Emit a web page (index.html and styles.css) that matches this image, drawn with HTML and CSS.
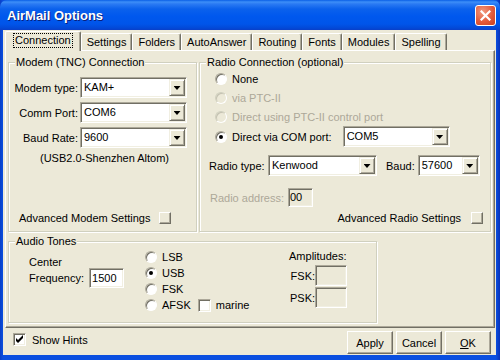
FILE: index.html
```html
<!DOCTYPE html>
<html lang="en">
<head>
    <meta charset="UTF-8">
    <title>AirMail Options</title>
    <link rel="stylesheet" href="styles.css">
</head>
<body>
    <div class="window">
        <div class="titlebar">
            <span class="title">AirMail Options</span>
            <span class="close-btn">
                <svg width="11" height="11" viewBox="0 0 11 11"><path d="M1.5 1.5 L9.5 9.5 M9.5 1.5 L1.5 9.5" stroke="#fff" stroke-width="2.2" stroke-linecap="square"/></svg>
            </span>
        </div>
        <div class="client">
            <div class="tabs">
                <div class="tab active"><span class="focus">Connection</span></div>
                <div class="tab">Settings</div>
                <div class="tab">Folders</div>
                <div class="tab">AutoAnswer</div>
                <div class="tab">Routing</div>
                <div class="tab">Fonts</div>
                <div class="tab">Modules</div>
                <div class="tab">Spelling</div>
            </div>

            <div class="page">
                <div class="top-row">
                    <fieldset class="group modem">
                        <legend>Modem (TNC) Connection</legend>
                        <div class="field-grid">
                            <label>Modem type:</label>
                            <div class="combo"><span class="combo-value">KAM+</span><span class="combo-btn"></span></div>
                            <label>Comm Port:</label>
                            <div class="combo"><span class="combo-value">COM6</span><span class="combo-btn"></span></div>
                            <label>Baud Rate:</label>
                            <div class="combo"><span class="combo-value">9600</span><span class="combo-btn"></span></div>
                        </div>
                        <div class="port-note">(USB2.0-Shenzhen Altom)</div>
                        <div class="advanced modem-adv">
                            <span>Advanced Modem Settings</span>
                            <span class="mini-btn"></span>
                        </div>
                    </fieldset>

                    <fieldset class="group radio-conn">
                        <legend>Radio Connection (optional)</legend>
                        <div class="option"><span class="radio"></span>None</div>
                        <div class="option disabled"><span class="radio"></span>via PTC-II</div>
                        <div class="option disabled"><span class="radio"></span>Direct using PTC-II control port</div>
                        <div class="option com-option">
                            <span class="radio checked"></span>Direct via COM port:
                            <div class="combo com-combo"><span class="combo-value">COM5</span><span class="combo-btn"></span></div>
                        </div>
                        <div class="type-row">
                            <label class="type-label">Radio type:</label>
                            <div class="combo type-combo"><span class="combo-value">Kenwood</span><span class="combo-btn"></span></div>
                            <label class="baud-label">Baud:</label>
                            <div class="combo baud-combo"><span class="combo-value">57600</span><span class="combo-btn"></span></div>
                        </div>
                        <div class="address-row">
                            <label class="disabled">Radio address:</label>
                            <span class="edit address-edit">00</span>
                        </div>
                        <div class="advanced radio-adv">
                            <span>Advanced Radio Settings</span>
                            <span class="mini-btn"></span>
                        </div>
                    </fieldset>
                </div>

                <fieldset class="group audio">
                    <legend>Audio Tones</legend>
                    <div class="audio-body">
                        <div class="freq">
                            <div class="freq-caption">Center</div>
                            <div class="freq-row">
                                <label>Frequency:</label>
                                <span class="edit freq-edit">1500</span>
                            </div>
                        </div>
                        <div class="modes">
                            <div class="mode"><span class="radio"></span>LSB</div>
                            <div class="mode"><span class="radio checked"></span>USB</div>
                            <div class="mode"><span class="radio"></span>FSK</div>
                            <div class="mode">
                                <span class="radio"></span>AFSK
                                <span class="checkbox marine-box"></span>marine
                            </div>
                        </div>
                        <div class="amps">
                            <div class="amps-title">Amplitudes:</div>
                            <div class="amps-grid">
                                <label>FSK:</label>
                                <span class="edit amp-edit"></span>
                                <label>PSK:</label>
                                <span class="edit amp-edit"></span>
                            </div>
                        </div>
                    </div>
                </fieldset>
            </div>

            <div class="footer">
                <div class="check-row">
                    <span class="checkbox">
                        <svg width="9" height="9" viewBox="0 0 9 9"><path d="M1 3 L3 5 L8 0 L8 3 L3 8 L1 6 Z" fill="#000"/></svg>
                    </span>
                    Show Hints
                </div>
                <div class="buttons">
                    <button class="btn">Apply</button>
                    <button class="btn">Cancel</button>
                    <button class="btn"><u>O</u>K</button>
                </div>
            </div>
        </div>
    </div>
</body>
</html>
```

FILE: styles.css
```css
* {
    box-sizing: border-box;
}
body {
    margin: 0;
    font-family: "Liberation Sans", Arial, sans-serif;
    font-size: 11px;
    color: #000;
    background: #ece9d8;
}
.window {
    width: 500px;
    height: 360px;
    display: flex;
    flex-direction: column;
    background: linear-gradient(to right, #0a3fc6, #0a4fe0 3px, #0a4fe0 496px, #0832b8);
    overflow: hidden;
}

/* title bar */
.titlebar {
    height: 30px;
    flex: none;
    display: flex;
    align-items: center;
    justify-content: space-between;
    padding: 0 4px 0 7px;
    border-radius: 7px 7px 0 0;
    background: linear-gradient(to bottom, #0a5fe6 0px, #3d8ff8 2px, #2a7af3 4px, #0b61ec 9px, #0058ee 16px, #0055ea 24px, #0249d8 28px, #0a3fc8 30px);
}
.title {
    color: #fff;
    font-weight: bold;
    font-size: 13px;
    text-shadow: 1px 1px 0 #0a1f7a;
}
.close-btn {
    width: 21px;
    height: 21px;
    display: flex;
    align-items: center;
    justify-content: center;
    border: 1px solid #fff;
    border-radius: 3px;
    background: radial-gradient(circle at 35% 30%, #f19a7f, #e35b3c 55%, #c9401f);
}

/* client area */
.client {
    flex: 1;
    margin: 0 4px 5px 3px;
    background: #ece9d8;
    display: flex;
    flex-direction: column;
}
.tabs {
    height: 20px;
    flex: none;
    display: flex;
    align-items: flex-end;
    padding-left: 2px;
}
.tab {
    height: 17px;
    padding: 0 5px;
    line-height: 16px;
    border-top: 1px solid #fff;
    border-left: 1px solid #fff;
    border-right: 1px solid #716f64;
    box-shadow: inset -1px 0 0 #aca899;
    border-radius: 2px 2px 0 0;
    white-space: nowrap;
}
.tab.active {
    height: 20px;
    margin-bottom: -1px;
    padding: 1px 7px 0;
    line-height: 13px;
    background: #ece9d8;
    position: relative;
    z-index: 1;
}
.focus {
    display: inline-block;
    border: 1px dotted #000;
    padding: 0 1px;
}

.page {
    height: 278px;
    flex: none;
    margin: 0 1px 0 2px;
    padding: 5px 3px 0 2px;
    border: 1px solid;
    border-color: #fff #716f64 #716f64 #fff;
    box-shadow: inset -1px -1px 0 #aca899;
}
.top-row {
    display: flex;
    gap: 2px;
}

/* group boxes */
.group {
    margin: 0;
    padding: 0;
    min-width: 0;
    border: 1px solid #d0d0bf;
    box-shadow: 1px 1px 0 #fff, inset 1px 1px 0 #fff;
}
.group legend {
    margin-left: 6px;
    padding: 0 1px;
    line-height: 13px;
    background: #ece9d8;
}
.modem, .radio-conn {
    height: 176px;
}
.modem {
    width: 189px;
}
.radio-conn {
    width: 292px;
}
.audio {
    width: 369px;
    height: 88px;
    margin-top: 3px;
}

/* controls */
.combo {
    display: flex;
    height: 21px;
    padding: 1px;
    background: #fff;
    border: 1px solid;
    border-color: #aca899 #fff #fff #aca899;
    box-shadow: inset 1px 1px 0 #716f64, inset -1px -1px 0 #f1efe2;
}
.combo-value {
    flex: 1;
    padding-left: 2px;
    line-height: 17px;
    white-space: nowrap;
}
.combo-btn {
    width: 16px;
    flex: none;
    display: flex;
    align-items: center;
    justify-content: center;
    background: #ece9d8;
    border: 1px solid;
    border-color: #f1efe2 #716f64 #716f64 #f1efe2;
    box-shadow: inset 1px 1px 0 #fff, inset -1px -1px 0 #aca899;
}
.combo-btn::after {
    content: "";
    width: 7px;
    height: 4px;
    margin-top: 1px;
    background: #000;
    clip-path: polygon(0 0, 100% 0, 50% 100%);
}
.edit {
    display: inline-block;
    height: 20px;
    padding: 0 3px;
    line-height: 18px;
    background: #fff;
    border: 1px solid;
    border-color: #aca899 #fff #fff #aca899;
    box-shadow: inset 1px 1px 0 #716f64, inset -1px -1px 0 #f1efe2;
}
.mini-btn {
    width: 12px;
    height: 12px;
    flex: none;
    background: #ece9d8;
    border: 1px solid;
    border-color: #fff #716f64 #716f64 #fff;
    box-shadow: inset -1px -1px 0 #aca899;
}
.radio {
    width: 12px;
    height: 12px;
    flex: none;
    border-radius: 50%;
    background: #fff;
    border: 1px solid;
    border-color: #aca899 #fff #fff #aca899;
    box-shadow: inset 1px 1px 0 #716f64;
    display: flex;
    align-items: center;
    justify-content: center;
}
.radio.checked::after {
    content: "";
    width: 4px;
    height: 4px;
    border-radius: 50%;
    background: #000;
}
.checkbox {
    width: 13px;
    height: 13px;
    flex: none;
    display: flex;
    align-items: center;
    justify-content: center;
    background: #fff;
    border: 1px solid;
    border-color: #aca899 #fff #fff #aca899;
    box-shadow: inset 1px 1px 0 #716f64, inset -1px -1px 0 #f1efe2;
}
.disabled {
    color: #aca899;
}
.option.disabled .radio {
    background: #ece9d8;
    border-color: #d0d0bf #fff #fff #d0d0bf;
    box-shadow: inset 1px 1px 0 #c5c2b2;
}

/* modem group */
.field-grid {
    display: grid;
    grid-template-columns: 66px 107px;
    column-gap: 2px;
    row-gap: 4px;
    align-items: center;
    margin: 8px 0 0 3px;
}
.field-grid label {
    text-align: right;
}
.port-note {
    margin: 4px 0 0 31px;
    line-height: 13px;
}
.advanced {
    display: flex;
    align-items: center;
    height: 13px;
    gap: 9px;
}
.modem-adv {
    margin-top: 46px;
    padding-left: 10px;
}

/* radio group */
.option {
    display: flex;
    align-items: center;
    gap: 5px;
    height: 19px;
    padding-left: 15px;
    white-space: nowrap;
}
.com-option {
    height: 21px;
}
.com-combo {
    width: 107px;
    margin-left: 6px;
}
.type-row {
    display: flex;
    align-items: center;
    margin-top: 8px;
    padding-left: 9px;
}
.type-label {
    width: 59px;
}
.type-combo {
    width: 109px;
}
.baud-label {
    margin: 0 3px 0 9px;
    white-space: nowrap;
}
.baud-combo {
    width: 62px;
}
.address-row {
    display: flex;
    align-items: center;
    gap: 4px;
    margin-top: 12px;
    padding-left: 10px;
}
.address-edit {
    width: 25px;
    height: 19px;
    padding: 0 1px;
    line-height: 17px;
    background: #ece9d8;
}
.radio-adv {
    justify-content: flex-end;
    margin-top: 4px;
    padding-right: 7px;
    gap: 10px;
}

/* audio group */
.audio-body {
    display: flex;
    align-items: flex-start;
}
.freq {
    margin: 9px 0 0 20px;
}
.freq-caption {
    line-height: 11px;
}
.freq-row {
    display: flex;
    align-items: center;
    gap: 5px;
}
.freq-edit {
    width: 35px;
    line-height: 18px;
    padding: 0 2px;
}
.modes {
    width: 144px;
    margin: 1px 0 0 21px;
}
.mode {
    display: flex;
    align-items: center;
    gap: 5px;
    height: 16px;
}
.marine-box {
    margin-left: 2px;
}
.amps {
    margin-top: 2px;
}
.amps-title {
    line-height: 13px;
}
.amps-grid {
    display: grid;
    grid-template-columns: 26px 32px;
    row-gap: 1px;
    align-items: center;
    margin-top: 2px;
}
.amps-grid label {
    text-align: right;
}
.amp-edit {
    height: 21px;
    background: #ece9d8;
}

/* bottom bar */
.footer {
    flex: 1;
    display: flex;
    align-items: flex-start;
    padding: 0 5px 0 10px;
}
.check-row {
    display: flex;
    align-items: center;
    gap: 6px;
    height: 13px;
    margin-top: 5px;
}
.buttons {
    display: flex;
    gap: 3px;
    margin-left: auto;
    margin-top: 3px;
}
.btn {
    width: 46px;
    height: 23px;
    padding: 0;
    font: inherit;
    color: #000;
    background: #ece9d8;
    border: 1px solid;
    border-color: #fff #716f64 #716f64 #fff;
    box-shadow: inset -1px -1px 0 #aca899;
}
```
